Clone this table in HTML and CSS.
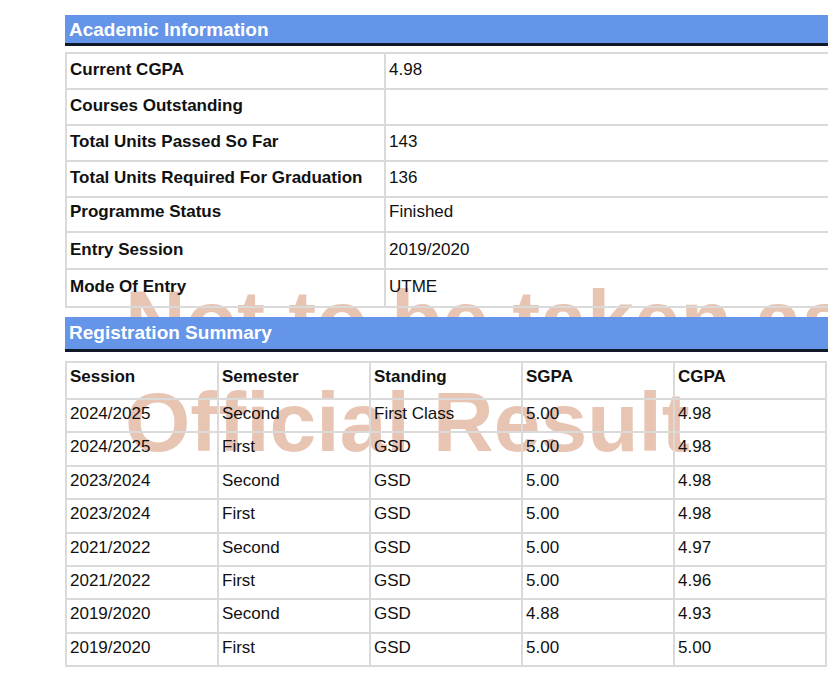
FILE: index.html
```html
<!DOCTYPE html>
<html lang="en">
<head>
<meta charset="utf-8">
<title>Academic Information</title>
<link rel="stylesheet" href="styles.css">
</head>
<body>
<div class="page">
  <div class="watermark" aria-hidden="true">Not to be taken as<br>Official Result</div>

  <h2 class="section-head head-academic">Academic Information</h2>
  <table class="info">
    <tbody>
      <tr><th>Current CGPA</th><td>4.98</td></tr>
      <tr><th>Courses Outstanding</th><td></td></tr>
      <tr><th>Total Units Passed So Far</th><td>143</td></tr>
      <tr><th>Total Units Required For Graduation</th><td>136</td></tr>
      <tr><th>Programme Status</th><td>Finished</td></tr>
      <tr><th>Entry Session</th><td>2019/2020</td></tr>
      <tr><th>Mode Of Entry</th><td>UTME</td></tr>
    </tbody>
  </table>

  <h2 class="section-head head-registration">Registration Summary</h2>
  <table class="summary">
    <thead>
      <tr><th>Session</th><th>Semester</th><th>Standing</th><th>SGPA</th><th>CGPA</th></tr>
    </thead>
    <tbody>
      <tr><td>2024/2025</td><td>Second</td><td>First Class</td><td>5.00</td><td>4.98</td></tr>
      <tr><td>2024/2025</td><td>First</td><td>GSD</td><td>5.00</td><td>4.98</td></tr>
      <tr><td>2023/2024</td><td>Second</td><td>GSD</td><td>5.00</td><td>4.98</td></tr>
      <tr><td>2023/2024</td><td>First</td><td>GSD</td><td>5.00</td><td>4.98</td></tr>
      <tr><td>2021/2022</td><td>Second</td><td>GSD</td><td>5.00</td><td>4.97</td></tr>
      <tr><td>2021/2022</td><td>First</td><td>GSD</td><td>5.00</td><td>4.96</td></tr>
      <tr><td>2019/2020</td><td>Second</td><td>GSD</td><td>4.88</td><td>4.93</td></tr>
      <tr><td>2019/2020</td><td>First</td><td>GSD</td><td>5.00</td><td>5.00</td></tr>
    </tbody>
  </table>
</div>
</body>
</html>
```

FILE: styles.css
```css
html, body {
  margin: 0;
  padding: 0;
  overflow: hidden;
  background: #ffffff;
}

body {
  font-family: "Liberation Sans", Arial, Helvetica, sans-serif;
  color: #111111;
  font-size: 17px;
}

.page {
  position: relative;
  width: 790px;
  padding: 15px 0 0 65px;
}

.watermark {
  position: absolute;
  left: 125px;
  top: 269px;
  z-index: 0;
  font-size: 84px;
  line-height: 102px;
  font-weight: bold;
  color: #e8c4b3;
  white-space: nowrap;
  pointer-events: none;
}

.section-head {
  position: relative;
  z-index: 2;
  margin: 0;
  background: #6495e8;
  color: #ffffff;
  font-size: 19px;
  font-weight: bold;
  padding: 0 0 0 4px;
  border-bottom: 3px solid #111827;
}

.head-academic {
  height: 28px;
  line-height: 30px;
}

.head-registration {
  height: 32px;
  line-height: 32px;
  margin-top: 9px;
}

table {
  position: relative;
  z-index: 1;
  border-collapse: collapse;
  table-layout: fixed;
  background: transparent;
}

th, td {
  border: 2px solid #dadada;
  text-align: left;
  vertical-align: top;
  font-size: 17px;
  line-height: 20px;
  padding: 0 3px;
  box-sizing: border-box;
}

th {
  font-weight: bold;
}

td {
  font-weight: normal;
}

.info {
  margin-top: 6px;
  width: 790px;
}

.info th {
  width: 319px;
}

.info th, .info td {
  height: 36px;
  padding-top: 6px;
}

.info tr:nth-child(5) th, .info tr:nth-child(5) td {
  height: 35px;
  padding-top: 4px;
}

.info tr:nth-child(6) th, .info tr:nth-child(6) td {
  height: 37px;
  padding-top: 7px;
}

.info tr:nth-child(7) th, .info tr:nth-child(7) td {
  height: 38px;
  padding-top: 7px;
}

.summary {
  margin-top: 9px;
  width: 762px;
}

.summary th {
  height: 37px;
  padding-top: 4px;
}

.summary td {
  height: 33.4px;
  padding-top: 4px;
}
```
